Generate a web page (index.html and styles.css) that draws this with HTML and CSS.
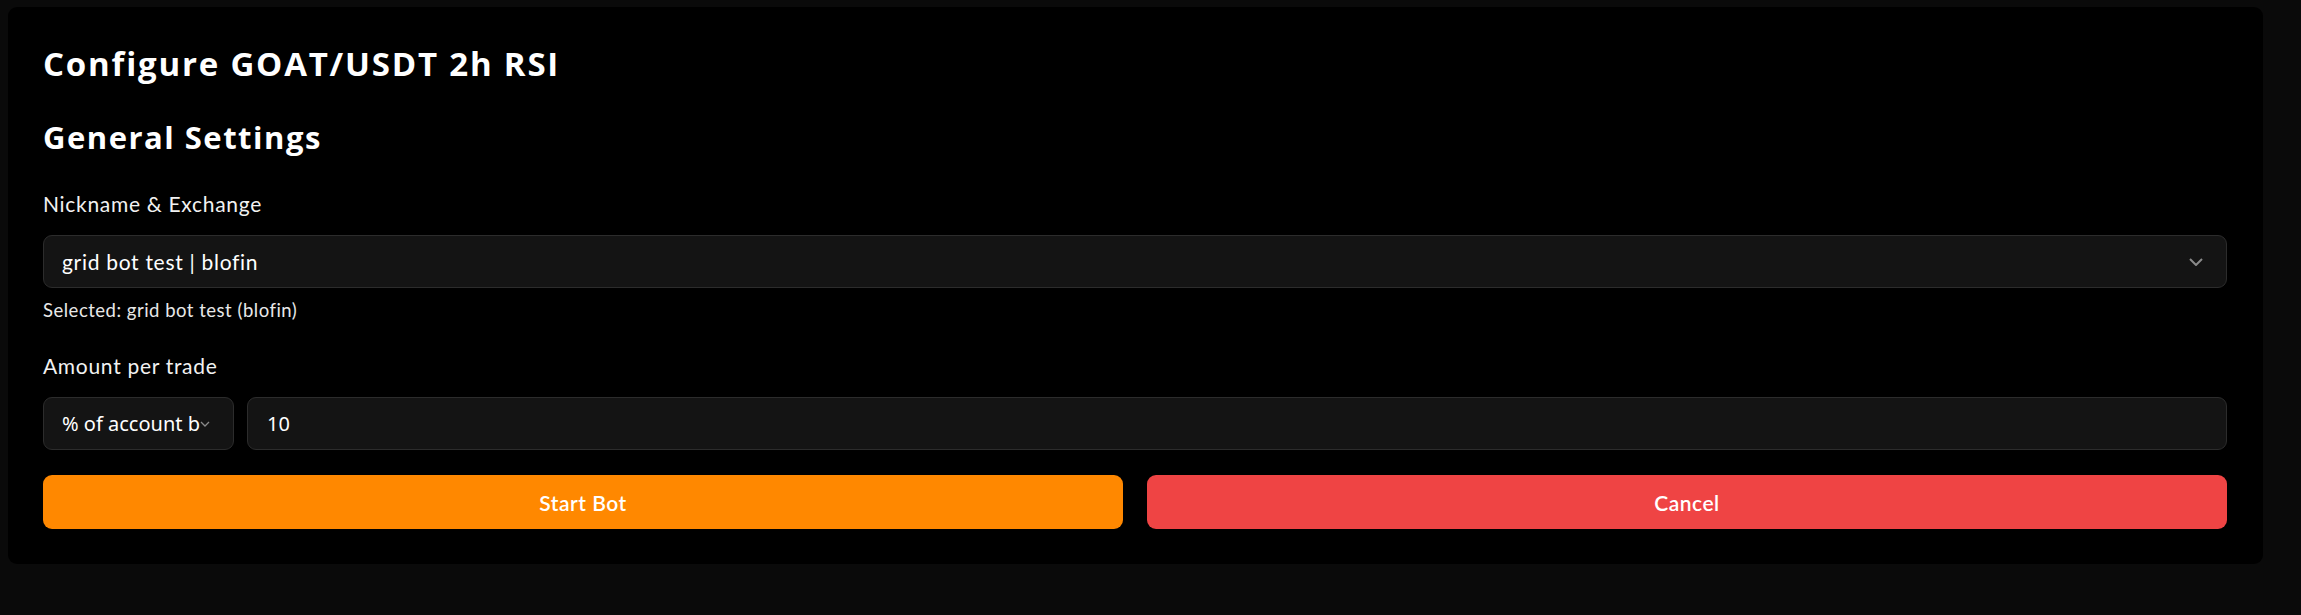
FILE: index.html
```html
<!DOCTYPE html>
<html lang="en">
<head>
<meta charset="utf-8">
<title>Configure GOAT/USDT 2h RSI</title>
<link rel="stylesheet" href="styles.css">
</head>
<body>
<div class="card">
  <h1 class="title">Configure GOAT/USDT 2h RSI</h1>
  <h2 class="section">General Settings</h2>

  <div class="field">
    <label class="label">Nickname &amp; Exchange</label>
    <div class="select select-wide">
      <span class="select-text">grid bot test | blofin</span>
      <svg class="chev" width="14" height="8" viewBox="0 0 14 8"><path d="M1 1l6 6 6-6" fill="none" stroke="#8a8a8a" stroke-width="2"/></svg>
    </div>
    <div class="hint">Selected: grid bot test (blofin)</div>
  </div>

  <div class="field">
    <label class="label">Amount per trade</label>
    <div class="amount-row">
      <div class="select select-small">
        <span class="native-text clip">% of account balance</span>
        <svg class="chev-small" width="10" height="6" viewBox="0 0 10 6"><path d="M1 1l4 4 4-4" fill="none" stroke="#8a8a8a" stroke-width="1.3"/></svg>
      </div>
      <div class="input"><span class="native-text">10</span></div>
    </div>
  </div>

  <div class="actions">
    <button class="btn btn-start">Start Bot</button>
    <button class="btn btn-cancel">Cancel</button>
  </div>
</div>
</body>
</html>
```

FILE: styles.css
```css
html, body {
  margin: 0;
  padding: 0;
}
body {
  background: #0a0a0a;
  padding: 7px 38px 50px 8px;
  font-family: Lato, "Open Sans", sans-serif;
  color: #ffffff;
}
.card {
  background: #000000;
  border-radius: 9px;
  padding: 36px 36px 35px 35px;
}
.title {
  margin: 0;
  font-family: "Open Sans", Lato, sans-serif;
  font-size: 33px;
  line-height: 42px;
  font-weight: 700;
  letter-spacing: 1.8px;
}
.section {
  margin: 31px 0 0 0;
  font-family: "Open Sans", Lato, sans-serif;
  font-size: 31px;
  line-height: 42px;
  font-weight: 700;
  letter-spacing: 1.5px;
}
.field {
  margin-top: 31px;
}
.field + .field {
  margin-top: 27px;
}
.label {
  display: block;
  font-size: 21px;
  line-height: 30px;
  color: #f2f2f2;
  letter-spacing: 0.7px;
}
.select {
  display: flex;
  align-items: center;
  box-sizing: border-box;
  background: #141414;
  border: 1.5px solid #2c2c2c;
  border-radius: 9px;
  height: 53px;
}
.select-wide {
  margin-top: 16px;
  padding: 0 23px 0 18px;
  justify-content: space-between;
}
.select-text {
  font-size: 21px;
  color: #ffffff;
  letter-spacing: 0.7px;
}
.chev {
  display: block;
}
.hint {
  margin-top: 9px;
  font-size: 18.5px;
  line-height: 27px;
  color: #e8e8e8;
  letter-spacing: 0.5px;
}
.amount-row {
  margin-top: 16px;
  display: flex;
  gap: 13px;
}
.select-small {
  width: 191px;
  flex: none;
  padding: 0 20px 0 18px;
}
.native-text {
  font-family: "Noto Sans", "Open Sans", sans-serif;
  font-size: 20px;
  color: #ffffff;
  white-space: nowrap;
}
.clip {
  overflow: hidden;
  width: 138px;
  flex: none;
}
.chev-small {
  display: block;
}
.input {
  flex: 1;
  display: flex;
  align-items: center;
  box-sizing: border-box;
  background: #141414;
  border: 1.5px solid #2c2c2c;
  border-radius: 9px;
  height: 53px;
  padding: 0 19px;
}
.actions {
  margin-top: 25px;
  display: flex;
  gap: 24px;
}
.btn {
  flex: 1;
  height: 54px;
  border: none;
  border-radius: 9px;
  font-family: Lato, "Open Sans", sans-serif;
  font-size: 21px;
  font-weight: 600;
  letter-spacing: 0.5px;
  color: #ffffff;
  cursor: pointer;
}
.btn-start {
  background: #ff8800;
}
.btn-cancel {
  background: #ef4444;
}
```
